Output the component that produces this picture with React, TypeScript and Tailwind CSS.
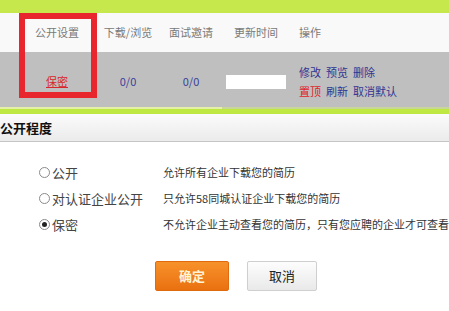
import React from "react";

const font = { fontFamily: '"Noto Sans CJK SC", "Noto Sans", sans-serif' };

const options = [
  { label: "公开", desc: "允许所有企业下载您的简历", checked: false },
  { label: "对认证企业公开", desc: "只允许58同城认证企业下载您的简历", checked: false },
  { label: "保密", desc: "不允许企业主动查看您的简历，只有您应聘的企业才可查看", checked: true },
];

function Radio({ checked }: { checked: boolean }) {
  return (
    <span className="flex h-[11px] w-[11px] shrink-0 items-center justify-center rounded-full border border-[#8a8a8a] bg-white">
      {checked && <span className="h-[5px] w-[5px] rounded-full bg-[#222]" />}
    </span>
  );
}

export default function App() {
  return (
    <div
      className="relative h-[311px] w-[449px] overflow-hidden bg-white text-[#333]"
      style={font}
    >
      {/* top bar */}
      <div className="h-[13px] bg-[#c6e84c]" />

      {/* table header */}
      <div className="flex h-[39px] items-center bg-[#f9f9f9] pl-[19px] text-[11px] text-[#7a7a7a]">
        <div className="w-[76px] text-center">公开设置</div>
        <div className="w-[66px] text-center">下载/浏览</div>
        <div className="w-[60px] text-center">面试邀请</div>
        <div className="w-[70px] text-center">更新时间</div>
        <div className="ml-[8px]">操作</div>
      </div>

      {/* table row */}
      <div className="flex h-[55px] items-center bg-[#bfbfbf] pl-[19px] pt-[4px] text-[11px]">
        <div className="w-[76px] text-center">
          <span className="text-[#d9262c] underline">保密</span>
        </div>
        <div className="w-[66px] text-center text-[#3a3f9a]">0/0</div>
        <div className="w-[60px] text-center text-[#3a3f9a]">0/0</div>
        <div className="flex w-[70px] justify-center">
          <div className="h-[14px] w-[60px] bg-white" />
        </div>
        <div className="ml-[8px] flex flex-col gap-[3px] leading-[16px] text-[#2f3592]">
          <div className="flex gap-[5px]">
            <span>修改</span>
            <span>预览</span>
            <span>删除</span>
          </div>
          <div className="flex gap-[5px]">
            <span className="text-[#e0242a]">置顶</span>
            <span>刷新</span>
            <span>取消默认</span>
          </div>
        </div>
      </div>

      {/* lime strip */}
      <div className="flex h-[2px]">
        <div className="w-[222px] bg-[#e4f0a8]" />
        <div className="flex-1 bg-[#c9d69a]" />
      </div>
      <div className="h-[5px] bg-[#bfe843]" />

      {/* section header */}
      <div className="flex h-[28px] items-center border-b border-[#c6c6c6] bg-gradient-to-b from-[#fbfbfb] to-[#ebebeb] text-[13px] font-bold text-[#111]">
        公开程度
      </div>

      {/* options */}
      <div className="flex flex-col gap-[7px] pt-[21px]">
        {options.map((o) => (
          <div key={o.label} className="flex h-[19px] items-center">
            <div className="flex w-[163px] items-center gap-[2px] pl-[39px] text-[13px] text-[#444]">
              <Radio checked={o.checked} />
              <span>{o.label}</span>
            </div>
            <div className="whitespace-nowrap text-[11px] text-[#333]">{o.desc}</div>
          </div>
        ))}
      </div>

      {/* buttons */}
      <div className="flex gap-[18px] pl-[155px] pt-[27px]">
        <button className="h-[30px] w-[74px] rounded-[2px] border border-[#e06a10] bg-gradient-to-b from-[#f7922a] to-[#ea700e] text-[13px] font-bold text-[#fff4d8]">
          确定
        </button>
        <button className="h-[30px] w-[70px] rounded-[2px] border border-[#cfcfcf] bg-gradient-to-b from-[#fdfdfd] to-[#e9e9e9] text-[13px] text-[#222]">
          取消
        </button>
      </div>

      {/* annotation box */}
      <div className="pointer-events-none absolute left-[19px] top-[13px] h-[85px] w-[78px] border-[6px] border-[#e8262e]" />
    </div>
  );
}
